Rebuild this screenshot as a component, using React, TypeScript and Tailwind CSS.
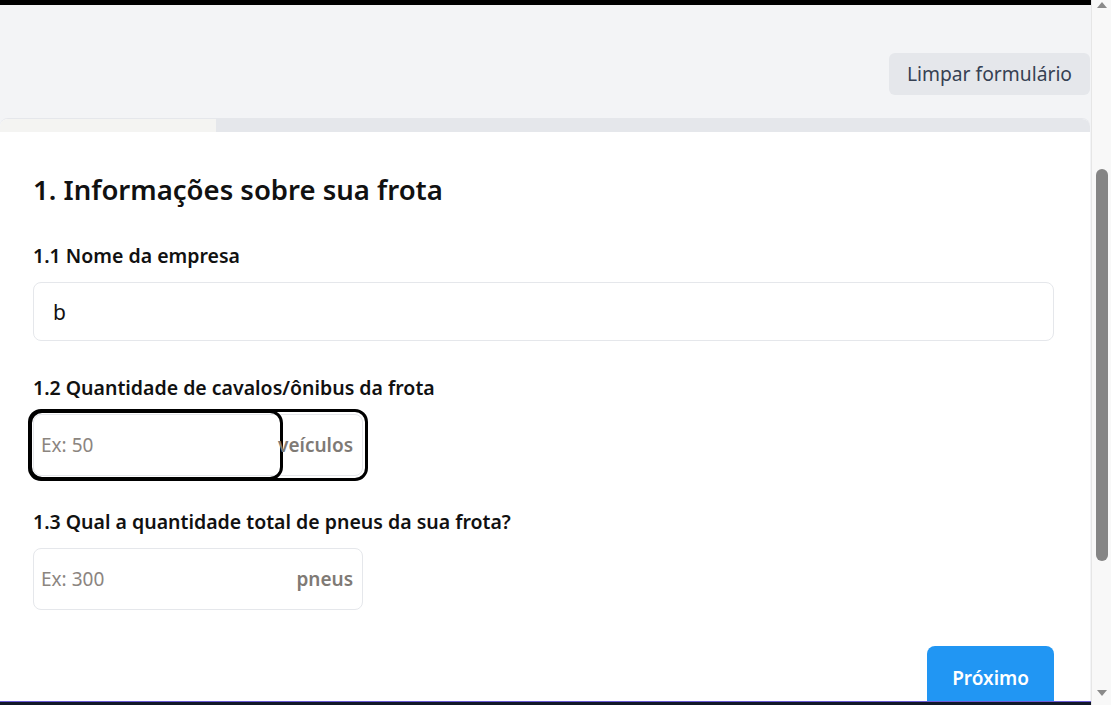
import { useState } from "react";

function Label({ children }: { children: React.ReactNode }) {
  return (
    <label className="mb-[12px] block text-[19.5px] font-semibold leading-[28px] text-[#111]">
      {children}
    </label>
  );
}

function Scrollbar() {
  return (
    <div className="flex h-full w-[20px] shrink-0 flex-col items-center border-l border-[#e6e6e6] bg-[#f8f8f8]">
      <svg width="12" height="8" viewBox="0 0 12 8" className="mt-[1px]">
        <path d="M6 1 L11 7 L1 7 Z" fill="#8a8a8a" />
      </svg>
      <div className="flex w-full flex-1 flex-col items-center pt-[160px]">
        <div className="h-[392px] w-[12px] rounded-full bg-[#858585]" />
      </div>
      <svg width="12" height="8" viewBox="0 0 12 8" className="mb-[8px]">
        <path d="M1 1 L11 1 L6 7 Z" fill="#8a8a8a" />
      </svg>
    </div>
  );
}

export default function App() {
  const [empresa, setEmpresa] = useState("b");
  const [veiculos, setVeiculos] = useState("");
  const [pneus, setPneus] = useState("");

  return (
    <div className="flex h-[705px] w-full overflow-hidden bg-white font-['Noto_Sans','Open_Sans',sans-serif]">
      <div className="flex min-w-0 flex-1 flex-col">
        <div className="h-[5px] shrink-0 bg-black" />
        <div className="flex min-h-0 flex-1 flex-col bg-gray-100">
          <div className="flex justify-end pb-[23px] pr-px pt-[48px]">
            <button
              type="button"
              onClick={() => {
                setEmpresa("");
                setVeiculos("");
                setPneus("");
              }}
              className="h-[42px] rounded-md bg-gray-200 px-[18px] text-[19.25px] text-gray-700"
            >
              Limpar formulário
            </button>
          </div>

          <div className="mr-px flex min-h-0 flex-1 flex-col overflow-hidden rounded-t-lg border-t border-gray-200 bg-white">
            <div className="flex h-[13px] shrink-0">
              <div className="w-[216px] bg-[#f4f4f2]" />
              <div className="flex-1 bg-gray-200" />
            </div>

            <div className="pl-[33px] pr-[36px] pt-[39px]">
              <h2 className="mb-[33px] text-[27.5px] font-semibold leading-[38px] text-[#111]">
                1. Informações sobre sua frota
              </h2>

              <div className="mb-[33px]">
                <Label>1.1 Nome da empresa</Label>
                <input
                  value={empresa}
                  onChange={(e) => setEmpresa(e.target.value)}
                  className="h-[59px] w-full rounded-lg border border-gray-200 px-[19px] text-[21px] text-[#111] outline-none"
                />
              </div>

              <div className="mb-[32px]">
                <Label>1.2 Quantidade de cavalos/ônibus da frota</Label>
                <div className="flex h-[62px] w-[330px] items-center rounded-lg border border-gray-200 outline-[3px] outline-offset-[2px] outline-black outline-solid">
                  <input
                    value={veiculos}
                    onChange={(e) => setVeiculos(e.target.value)}
                    placeholder="Ex: 50"
                    className="h-full w-[244px] rounded-lg px-[7px] text-[19px] text-[#111] outline-[3px] outline-offset-[2px] outline-black outline-solid placeholder:text-[#8b8580]"
                  />
                  <span className="ml-auto pr-[9px] text-[19px] font-semibold text-[#7f7a75]">
                    veículos
                  </span>
                </div>
              </div>

              <div className="mb-[36px]">
                <Label>1.3 Qual a quantidade total de pneus da sua frota?</Label>
                <div className="flex h-[62px] w-[330px] items-center rounded-lg border border-gray-200">
                  <input
                    value={pneus}
                    onChange={(e) => setPneus(e.target.value)}
                    placeholder="Ex: 300"
                    className="h-full min-w-0 flex-1 rounded-lg px-[7px] text-[19px] text-[#111] outline-none placeholder:text-[#8b8580]"
                  />
                  <span className="pr-[9px] text-[19px] font-semibold text-[#7f7a75]">
                    pneus
                  </span>
                </div>
              </div>

              <div className="flex justify-end">
                <button
                  type="button"
                  className="h-[64px] rounded-lg bg-[#2196f3] px-[25px] text-[19px] font-semibold text-white"
                >
                  Próximo
                </button>
              </div>
            </div>
          </div>
        </div>
        <div className="h-px shrink-0 bg-[#6b5bd6]" />
        <div className="h-[3px] shrink-0 bg-[#111827]" />
      </div>
      <Scrollbar />
    </div>
  );
}
